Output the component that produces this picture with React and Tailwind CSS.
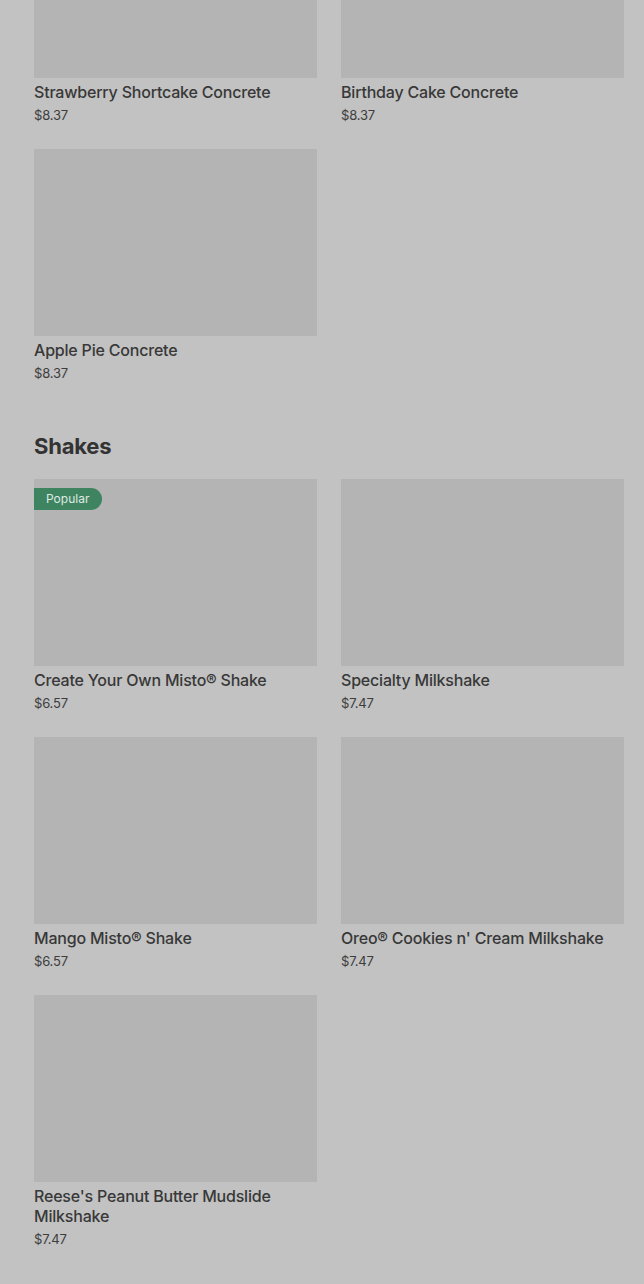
import React from 'react';

const concretes = [
    { name: 'Strawberry Shortcake Concrete', price: '$8.37' },
    { name: 'Birthday Cake Concrete', price: '$8.37' },
    { name: 'Apple Pie Concrete', price: '$8.37' },
];

const shakes = [
    { name: 'Create Your Own Misto® Shake', price: '$6.57', popular: true },
    { name: 'Specialty Milkshake', price: '$7.47' },
    { name: 'Mango Misto® Shake', price: '$6.57' },
    { name: 'Oreo® Cookies n\' Cream Milkshake', price: '$7.47' },
    { name: 'Reese\'s Peanut Butter Mudslide Milkshake', price: '$7.47' },
];

const ItemCard = ({ item }) => (
    <div className="flex flex-col pb-[25px]">
        <div className="relative h-[187px] bg-[#b4b4b4]">
            {item.popular && (
                <span className="absolute left-0 top-[9px] h-[22px] pl-3 pr-[13px] flex items-center rounded-r-full bg-[#3f8460] text-[12px] text-[#dfe9e2]">
                    Popular
                </span>
            )}
        </div>
        <div className="mt-1 text-[16px] leading-5 font-medium tracking-[-0.2px] text-[#383838]">{item.name}</div>
        <div className="mt-1 text-[13px] leading-[18px] tracking-[-0.2px] text-[#3d3d3d]">{item.price}</div>
    </div>
);

export default function App() {
    return (
        <div className="w-[644px] h-[1284px] overflow-hidden bg-[#c2c2c2]" style={{ fontFamily: 'Inter, "Liberation Sans", sans-serif' }}>
            <div className="-mt-[109px] pl-[34px] pr-[20px]">
                <div className="grid grid-cols-2 gap-x-6">
                    {concretes.map(item => <ItemCard key={item.name} item={item} />)}
                </div>

                <h2 className="mt-[25px] mb-[19px] text-[22px] leading-7 font-bold text-[#333] tracking-[-0.2px]">Shakes</h2>

                <div className="grid grid-cols-2 gap-x-6">
                    {shakes.map(item => <ItemCard key={item.name} item={item} />)}
                </div>
            </div>
        </div>
    );
}
